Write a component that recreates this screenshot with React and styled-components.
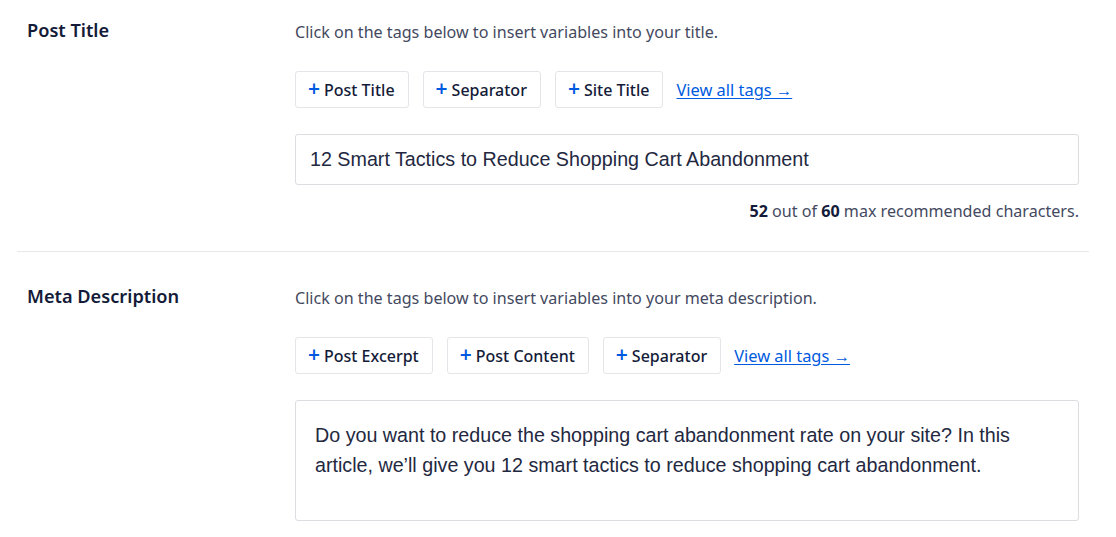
import React from "react";
import styled, { createGlobalStyle } from "styled-components";

const Global = createGlobalStyle`
  * { box-sizing: border-box; }
  body {
    margin: 0;
    background: #ffffff;
    font-family: "Noto Sans", "Open Sans", sans-serif;
    color: #141b38;
  }
`;

const Page = styled.div`
  width: 1116px;
  padding: 0 27px 0 17px;
`;

const Section = styled.section`
  display: grid;
  grid-template-columns: 268px 1fr;
  padding: ${(p) => p.$pad};
  padding-left: 10px;
  padding-right: 10px;
  border-bottom: ${(p) => (p.$divider ? "1px solid #e8e8eb" : "none")};
`;

const Label = styled.h3`
  margin: -2px 0 0;
  font-size: 18.2px;
  font-weight: 600;
  line-height: 22px;
  color: #141b38;
`;

const Body = styled.div`
  display: flex;
  flex-direction: column;
`;

const Hint = styled.p`
  margin: 0;
  font-size: 16.1px;
  line-height: 22px;
  color: #434960;
`;

const Tags = styled.div`
  display: flex;
  align-items: center;
  gap: 14px;
  margin-top: 28px;
`;

const Tag = styled.button`
  display: inline-flex;
  align-items: center;
  gap: 4px;
  height: 37px;
  padding: 0 13px 0 12px;
  background: #fff;
  border: 1px solid #e4e5e9;
  border-radius: 3px;
  font-family: inherit;
  font-size: 16px;
  font-weight: 500;
  color: #141b38;
  cursor: pointer;
`;

const Plus = styled.span`
  color: #005ae0;
  font-weight: 600;
  font-size: 21px;
  line-height: 1;
  margin-top: -2px;
`;

const Link = styled.a`
  font-size: 16.4px;
  color: #005ae0;
  text-decoration: underline;
  text-underline-offset: 2px;
  margin-left: -1px;
`;

const Field = styled.div`
  margin-top: 26px;
  border: 1px solid #dcdde1;
  border-radius: 3px;
  background: #fff;
  font-family: "Liberation Sans", Arial, sans-serif;
  font-size: 19.7px;
  color: #23283f;
  height: ${(p) => p.$h};
  padding: ${(p) => p.$pad};
  line-height: ${(p) => p.$lh};
`;

const Counter = styled.div`
  margin-top: 15px;
  text-align: right;
  font-size: 16.1px;
  line-height: 22px;
  color: #434960;
  b { color: #141b38; font-weight: 700; }
`;

const tagsTitle = ["Post Title", "Separator", "Site Title"];
const tagsDesc = ["Post Excerpt", "Post Content", "Separator"];

function TagRow({ items }) {
  return (
    <Tags>
      {items.map((t) => (
        <Tag key={t}>
          <Plus>+</Plus>
          {t}
        </Tag>
      ))}
      <Link href="#">View all tags →</Link>
    </Tags>
  );
}

export default function App() {
  return (
    <>
      <Global />
      <Page>
        <Section $pad="21px 0 29px" $divider>
          <Label>Post Title</Label>
          <Body>
            <Hint>Click on the tags below to insert variables into your title.</Hint>
            <TagRow items={tagsTitle} />
            <Field $h="51px" $pad="0 14px" $lh="49px">
              12 Smart Tactics to Reduce Shopping Cart Abandonment
            </Field>
            <Counter>
              <b>52</b> out of <b>60</b> max recommended characters.
            </Counter>
          </Body>
        </Section>
        <Section $pad="35px 0 20px">
          <Label>Meta Description</Label>
          <Body>
            <Hint>Click on the tags below to insert variables into your meta description.</Hint>
            <TagRow items={tagsDesc} />
            <Field $h="121px" $pad="19px 19px" $lh="30px">
              Do you want to reduce the shopping cart abandonment rate on your site? In this
              article, we’ll give you 12 smart tactics to reduce shopping cart abandonment.
            </Field>
          </Body>
        </Section>
      </Page>
    </>
  );
}
